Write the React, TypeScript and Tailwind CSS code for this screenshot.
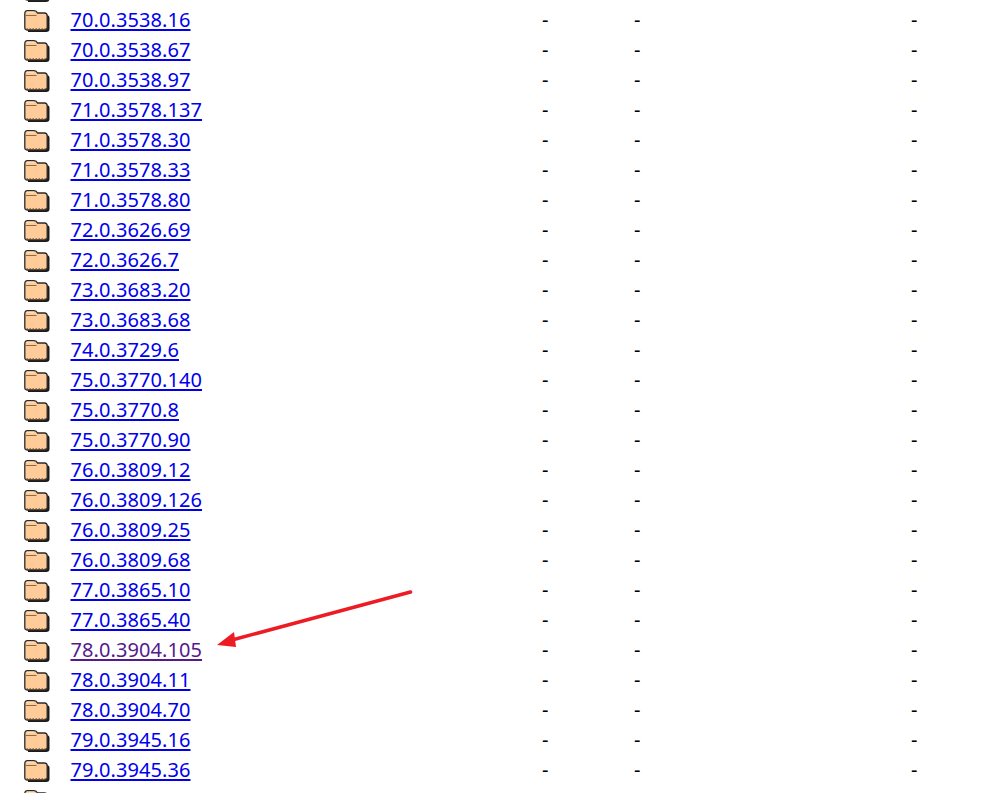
const versions = [
  "70.0.3538.16", "70.0.3538.67", "70.0.3538.97", "71.0.3578.137", "71.0.3578.30", "71.0.3578.33",
  "71.0.3578.80", "72.0.3626.69", "72.0.3626.7", "73.0.3683.20", "73.0.3683.68", "74.0.3729.6",
  "75.0.3770.140", "75.0.3770.8", "75.0.3770.90", "76.0.3809.12", "76.0.3809.126", "76.0.3809.25",
  "76.0.3809.68", "77.0.3865.10", "77.0.3865.40", "78.0.3904.105", "78.0.3904.11", "78.0.3904.70",
  "79.0.3945.16", "79.0.3945.36", "80.0.3987.106",
]

function FolderIcon() {
  return (
    <svg width="26" height="24" viewBox="0 0 26 24">
      {/* drop shadow on the right and bottom */}
      <path d="M4 7H22Q25.5 7 25.5 10V21Q25.5 24 22 24H4Z" fill="#1a1a1a" />
      {/* outline and body */}
      <path
        d="M0.8 6Q0.8 2.6 3.5 2.6H10Q12.5 2.6 13.5 5H20.5Q23.2 5 23.2 8V19.5Q23.2 22 20.5 22H3.5Q0.8 22 0.8 19.5Z"
        fill="#ffcc99"
        stroke="#2a2a2a"
        strokeWidth="1.3"
      />
      {/* tab fold */}
      <path d="M1.5 7.5H12.5" stroke="#8a6a48" strokeWidth="1" />
      <path d="M3 4.2H10" stroke="#ffe6cc" strokeWidth="1" />
      {/* dotted lower edge */}
      <path d="M2.5 20.5H22" stroke="#a8784a" strokeWidth="1.2" strokeDasharray="1.5 1.5" />
    </svg>
  )
}

export default function App() {
  return (
    <div className="relative h-[793px] overflow-hidden bg-white font-['Noto_Sans',sans-serif] text-[20px] text-black">
      <div className="-mt-[25px] pl-6">
        <div className="flex h-[30px] items-center">
          <FolderIcon />
        </div>
        {versions.map((v) => (
          <div key={v} className="grid h-[30px] grid-cols-[46.5px_471.5px_92px_277px_60px] items-center">
            <div className="flex items-center">
              <FolderIcon />
            </div>
            <a
              href="#"
              className={
                v === "78.0.3904.105"
                  ? "tracking-[0.08px] text-[#551a8b] underline decoration-2 underline-offset-2"
                  : "tracking-[0.08px] text-[#0000ee] underline decoration-2 underline-offset-2"
              }
            >
              {v}
            </a>
            <span>-</span>
            <span>-</span>
            <span>-</span>
          </div>
        ))}
      </div>

      {/* red annotation arrow */}
      <svg className="absolute left-0 top-0" width="998" height="793" viewBox="0 0 998 793" fill="none">
        <path d="M410.5 592L232 640" stroke="#ed1c24" strokeWidth="3.5" strokeLinecap="round" />
        <path d="M217 645L234 632L236 647Z" fill="#ed1c24" />
      </svg>
    </div>
  )
}
